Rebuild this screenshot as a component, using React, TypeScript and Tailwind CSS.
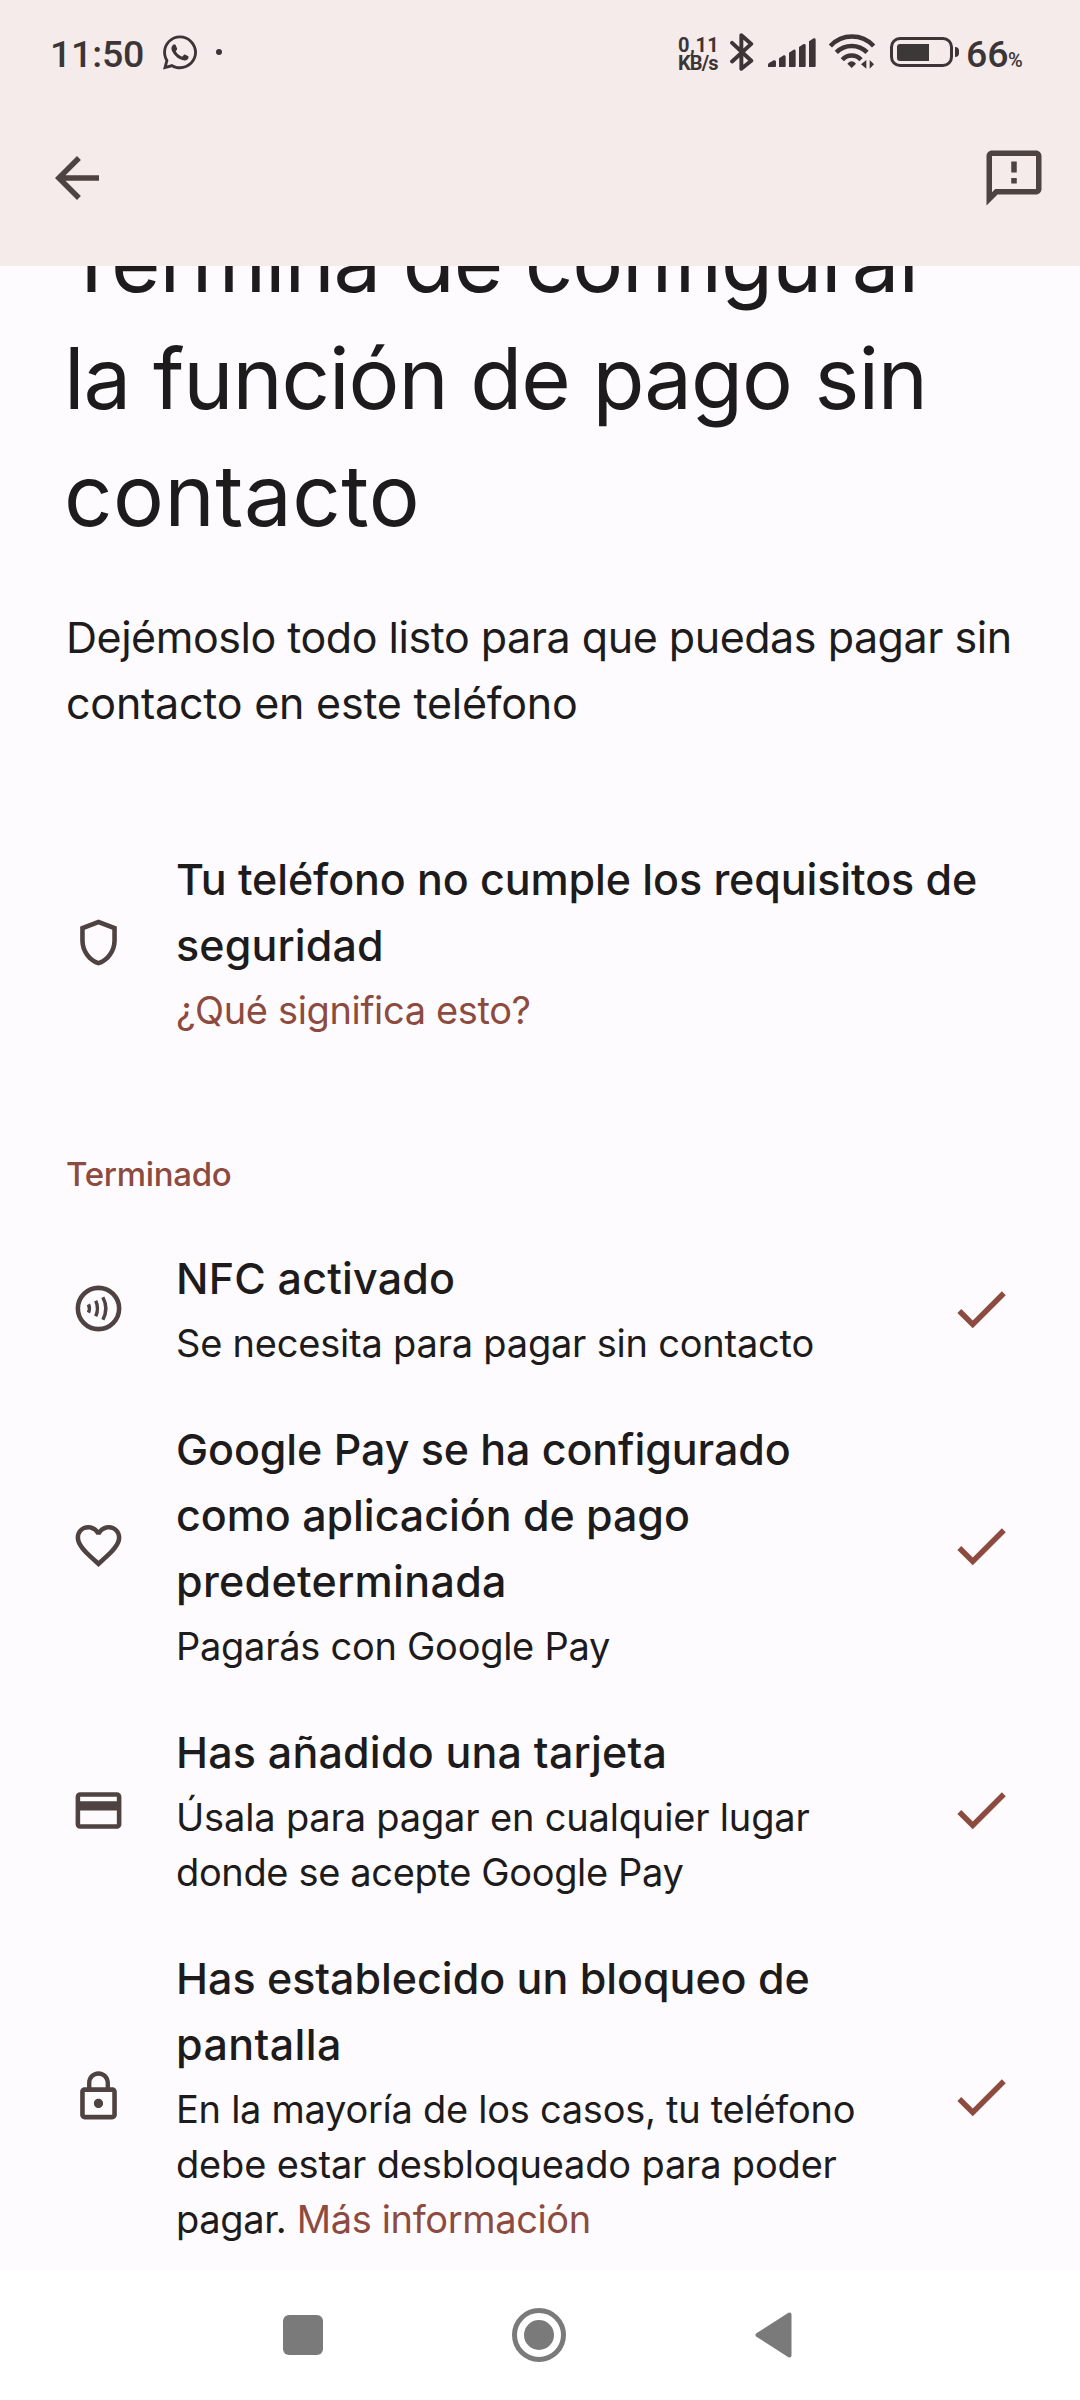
import type { ReactNode } from "react";
import { FaWhatsapp } from "react-icons/fa";

interface Line {
  text: string;
  tracking: string;
}

interface Step {
  id: string;
  icon: ReactNode;
  title: Line[];
  body: Line[];
  link?: string;
}

const ICON = "size-[55px] fill-[#4f4342]";

function ShieldIcon() {
  return (
    <svg viewBox="0 0 24 24" className={ICON}>
      <path d="M12 2 4 5v6.09c0 5.05 3.41 9.76 8 10.91 4.59-1.15 8-5.86 8-10.91V5l-8-3zm6 9.09c0 4-2.55 7.7-6 8.83-3.45-1.13-6-4.82-6-8.83v-4.7l6-2.25 6 2.25v4.7z" />
    </svg>
  );
}

function ContactlessIcon() {
  return (
    <svg viewBox="0 0 24 24" className="size-[55px] fill-none stroke-[#4f4342]">
      <circle cx="12" cy="12" r="9" strokeWidth="2" />
      <path
        d="M7.6 10.2q.9 1.8 0 3.6M10.8 8.6q1.5 3.4 0 6.8M13.9 7.1q2.6 4.9 0 9.8"
        strokeWidth="1.5"
      />
    </svg>
  );
}

function HeartIcon() {
  return (
    <svg viewBox="0 0 24 24" className={ICON}>
      <path d="M16.5 3c-1.74 0-3.41.81-4.5 2.09C10.91 3.81 9.24 3 7.5 3 4.42 3 2 5.42 2 8.5c0 3.78 3.4 6.86 8.55 11.54L12 21.35l1.45-1.32C18.6 15.36 22 12.28 22 8.5 22 5.42 19.58 3 16.5 3zm-4.4 15.55-.1.1-.1-.1C7.14 14.24 4 11.39 4 8.5 4 6.5 5.5 5 7.5 5c1.54 0 3.04.99 3.57 2.36h1.87C13.46 5.99 14.96 5 16.5 5c2 0 3.5 1.5 3.5 3.5 0 2.89-3.14 5.74-7.9 10.05z" />
    </svg>
  );
}

function CardIcon() {
  return (
    <svg viewBox="0 0 24 24" className={ICON}>
      <path d="M20 4H4c-1.11 0-1.99.89-1.99 2L2 18c0 1.11.89 2 2 2h16c1.11 0 2-.89 2-2V6c0-1.11-.89-2-2-2zm0 14H4v-6h16v6zm0-10H4V6h16v2z" />
    </svg>
  );
}

function LockIcon() {
  return (
    <svg viewBox="0 0 24 24" className={ICON}>
      <path d="M12 17c1.1 0 2-.9 2-2s-.9-2-2-2-2 .9-2 2 .9 2 2 2zm6-9h-1V6c0-2.76-2.24-5-5-5S7 3.24 7 6v2H6c-1.1 0-2 .9-2 2v10c0 1.1.9 2 2 2h12c1.1 0 2-.9 2-2V10c0-1.1-.9-2-2-2zM8.9 6c0-1.71 1.39-3.1 3.1-3.1s3.1 1.39 3.1 3.1v2H8.9V6zM18 20H6V10h12v10z" />
    </svg>
  );
}

function CheckIcon() {
  return (
    <svg viewBox="0 0 24 24" className="-mt-0.5 size-[66px] fill-[#8c4b3e]">
      <path d="M9 16.17 4.83 12l-1.42 1.41L9 19 21 7l-1.41-1.41z" />
    </svg>
  );
}

const pending: Step = {
  id: "security",
  icon: <ShieldIcon />,
  title: [
    { text: "Tu teléfono no cumple los requisitos de", tracking: "tracking-[-0.1px]" },
    { text: "seguridad", tracking: "tracking-[0.13px]" },
  ],
  body: [],
  link: "¿Qué significa esto?",
};

const steps: Step[] = [
  {
    id: "nfc",
    icon: <ContactlessIcon />,
    title: [{ text: "NFC activado", tracking: "tracking-[0.18px]" }],
    body: [{ text: "Se necesita para pagar sin contacto", tracking: "tracking-[-0.21px]" }],
  },
  {
    id: "default-app",
    icon: <HeartIcon />,
    title: [
      { text: "Google Pay se ha configurado", tracking: "tracking-[-0.09px]" },
      { text: "como aplicación de pago", tracking: "tracking-[-0.05px]" },
      { text: "predeterminada", tracking: "tracking-[0.31px]" },
    ],
    body: [{ text: "Pagarás con Google Pay", tracking: "tracking-[-0.27px]" }],
  },
  {
    id: "card",
    icon: <CardIcon />,
    title: [{ text: "Has añadido una tarjeta", tracking: "tracking-[0.19px]" }],
    body: [
      { text: "Úsala para pagar en cualquier lugar", tracking: "tracking-[-0.17px]" },
      { text: "donde se acepte Google Pay", tracking: "tracking-[-0.35px]" },
    ],
  },
  {
    id: "lock",
    icon: <LockIcon />,
    title: [
      { text: "Has establecido un bloqueo de", tracking: "tracking-[-0.03px]" },
      { text: "pantalla", tracking: "tracking-[0.4px]" },
    ],
    body: [
      { text: "En la mayoría de los casos, tu teléfono", tracking: "tracking-[-0.27px]" },
      { text: "debe estar desbloqueado para poder", tracking: "tracking-[-0.18px]" },
      { text: "pagar.", tracking: "tracking-[-0.34px]" },
    ],
    link: "Más información",
  },
];

function StatusBar() {
  return (
    <div className="flex h-[104px] items-center pl-[50px] font-['Roboto',sans-serif] text-[#3d3535]">
      <span className="mt-[5px] w-[113px] text-[37.5px] leading-none font-medium tracking-[-0.2px]">
        11:50
      </span>
      <FaWhatsapp className="h-[39px] w-[34px]" />
      <span className="ml-[19px] size-1.5 rounded-full bg-[#3d3535]" />

      <div className="ml-auto flex items-center pr-[53px]">
        <div className="mt-1 w-[52px] text-[20px] leading-[18.5px] font-bold">
          <div className="tracking-[0.5px]">0,11</div>
          <div className="tracking-[-0.9px]">KB/s</div>
        </div>

        {/* Bluetooth */}
        <svg
          viewBox="0 0 72 115"
          className="h-[38px] w-6 fill-none stroke-current"
          strokeWidth="12"
          strokeLinejoin="round"
          strokeLinecap="round"
        >
          <path d="M6 30 64 84 34 108V7L64 33 6 86" />
        </svg>

        {/* Mobile signal */}
        <svg viewBox="0 0 144 96" className="ml-3.5 h-8 w-12 fill-current">
          <path d="M0 93V86q0-3 3-5l14-8q7-2 7 4v13q0 3-3 3zM33 93V67l14-9q6-1 6 4v28q0 3-3 3zM63 93V50l14-9q6-1 6 4v45q0 3-3 3zM93 93V33l14-9q6-1 6 4v62q0 3-3 3zM123 93V16l14-9q6-1 6 4v79q0 3-3 3z" />
        </svg>

        {/* Wi-Fi with traffic arrows */}
        <svg
          viewBox="0 0 138 108"
          className="ml-[13px] h-9 w-[46px] fill-none stroke-current"
          strokeWidth="13.5"
        >
          <path d="M4 36A88 88 0 0 1 134 36M22 55A65 65 0 0 1 114 55M40 77A38 38 0 0 1 96 77" />
          <path d="M55 89q13-14 26 0L68 102z" className="fill-current stroke-none" />
          <path d="M112 78V104L96 91zM122 104V78L135 91z" className="fill-current stroke-none" />
        </svg>

        {/* Battery */}
        <div className="ml-[15px] flex items-center">
          <div className="h-[30px] w-[63px] rounded-[10px] border-3 border-current p-[3.5px]">
            <div className="h-full w-8 rounded-l-[3px] bg-[#3d3838]" />
          </div>
          <div className="ml-0.5 h-2.5 w-1 rounded-r-sm bg-[#3d3535]" />
        </div>

        <div className="mt-[5px] ml-[7px] flex items-baseline leading-none font-medium">
          <span className="w-[42px] text-[37.5px]">66</span>
          <span className="w-[19px] text-[20px]">%</span>
        </div>
      </div>
    </div>
  );
}

function StepRow({ step, done = false }: { step: Step; done?: boolean }) {
  return (
    <div className="flex items-center">
      <div className="-mt-0.5 flex w-[110px] shrink-0 items-center pl-[5px]">{step.icon}</div>
      <div className="grow">
        <h2 className="-mt-1 mb-[5px] text-[43px] leading-[66px] font-medium">
          {step.title.map((line) => (
            <span key={line.text} className={`block whitespace-nowrap ${line.tracking}`}>
              {line.text}
            </span>
          ))}
        </h2>
        <p className="-mb-px text-[38px] leading-[55px] whitespace-nowrap">
          {step.body.map((line, i) => (
            <span key={line.text} className={line.tracking}>
              {i > 0 && <br />}
              {line.text}
            </span>
          ))}
          {step.link && (
            <a className="tracking-[-0.36px] text-[#8c4b3e]">
              {step.body.length > 0 && " "}
              {step.link}
            </a>
          )}
        </p>
      </div>
      {done && <CheckIcon />}
    </div>
  );
}

export default function App() {
  return (
    <div className="flex h-[2400px] w-[1080px] flex-col overflow-hidden bg-[#fefbff] font-['Inter',sans-serif] text-[#1d1b1b]">
      <header className="z-10 h-[266px] shrink-0 bg-[#f5ebeb]">
        <StatusBar />
        <div className="flex h-[148px] items-center justify-between pr-[33px] pl-[44px]">
          <svg viewBox="0 0 24 24" className="size-[66px] fill-[#4f4342]">
            <path d="M20 11H7.83l5.59-5.59L12 4l-8 8 8 8 1.41-1.41L7.83 13H20v-2z" />
          </svg>
          <svg viewBox="0 0 24 24" className="size-[66px] fill-[#4f4342]">
            <path d="M20 2H4c-1.1 0-2 .9-2 2v18l4-4h14c1.1 0 2-.9 2-2V4c0-1.1-.9-2-2-2zm0 14H5.17L4 17.17V4h16v12zM11 12h2v2h-2zM11 6h2v4h-2z" />
          </svg>
        </div>
      </header>

      <main className="min-h-0 grow overflow-hidden">
        {/* Content is scrolled a little under the app bar */}
        <div className="-mt-[63px] px-[66px]">
          <h1 className="-ml-0.5 text-[85px] leading-[117px] whitespace-nowrap">
            <span className="block tracking-[-1.15px]">Termina de configurar</span>
            <span className="block tracking-[-1.1px]">la función de pago sin</span>
            <span className="block tracking-[0.5px]">contacto</span>
          </h1>
          <p className="mt-[50px] text-[43px] leading-[66px] whitespace-nowrap">
            <span className="block tracking-[-0.47px]">
              Dejémoslo todo listo para que puedas pagar sin
            </span>
            <span className="block tracking-[-0.23px]">contacto en este teléfono</span>
          </p>

          <section className="mt-[114px]">
            <StepRow step={pending} />
          </section>

          <h3 className="mt-[115px] text-[33px] leading-[44px] font-medium tracking-[-0.3px] text-[#8c4b3e]">
            Terminado
          </h3>
          <section className="mt-[53px] flex flex-col gap-[50px]">
            {steps.map((step) => (
              <StepRow key={step.id} step={step} done />
            ))}
          </section>
        </div>
      </main>

      <nav className="flex h-[130px] shrink-0 items-center bg-white pl-[283px]">
        <div className="size-10 rounded-md bg-[#7a7a7a]" />
        <div className="ml-[189px] flex size-[54px] items-center justify-center rounded-full border-[5px] border-[#7a7a7a]">
          <div className="size-[30px] rounded-full bg-[#7a7a7a]" />
        </div>
        <svg
          viewBox="0 0 37 46"
          className="ml-[189px] h-[46px] w-[37px] fill-[#7a7a7a] stroke-[#7a7a7a]"
          strokeWidth="4"
          strokeLinejoin="round"
        >
          <path d="M2.5 23 34.500 2.500V43.500z" />
        </svg>
      </nav>
    </div>
  );
}
